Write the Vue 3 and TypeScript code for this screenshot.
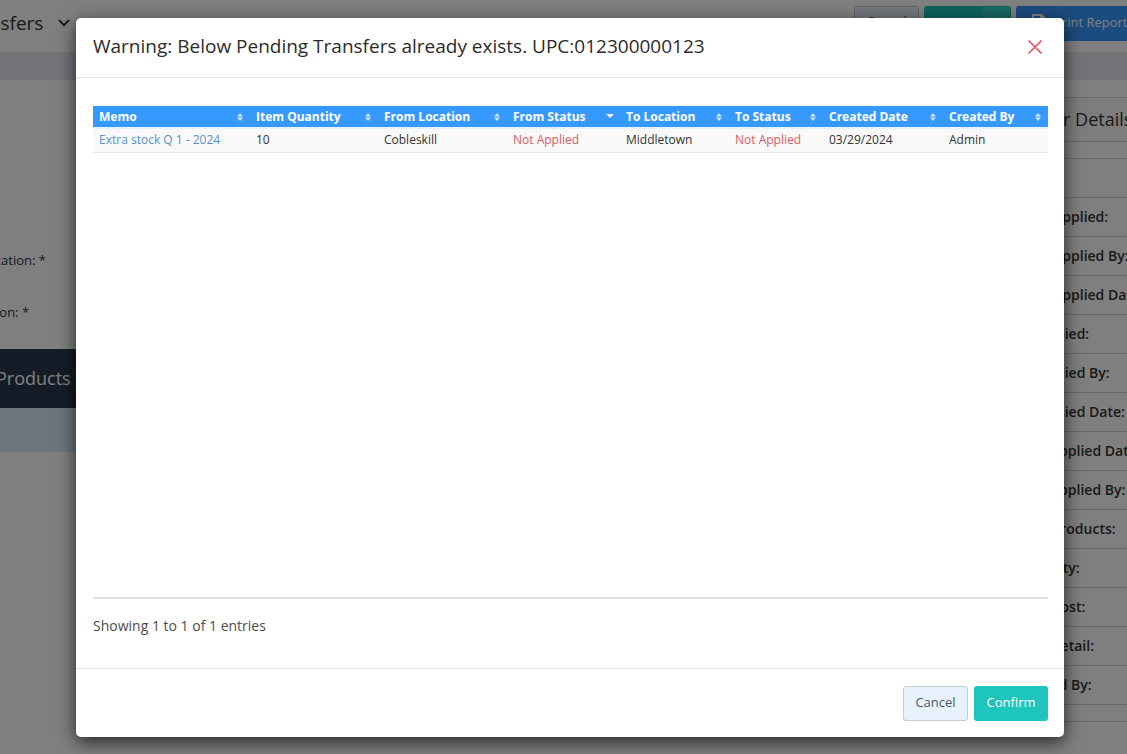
<script setup lang="ts">
import { ref } from 'vue'

interface Column {
  key: string
  label: string
  width: number
}

interface Transfer {
  memo: string
  quantity: number
  fromLocation: string
  fromStatus: string
  toLocation: string
  toStatus: string
  createdDate: string
  createdBy: string
}

const columns: Column[] = [
  { key: 'memo', label: 'Memo', width: 157 },
  { key: 'quantity', label: 'Item Quantity', width: 128 },
  { key: 'fromLocation', label: 'From Location', width: 129 },
  { key: 'fromStatus', label: 'From Status', width: 113 },
  { key: 'toLocation', label: 'To Location', width: 109 },
  { key: 'toStatus', label: 'To Status', width: 94 },
  { key: 'createdDate', label: 'Created Date', width: 120 },
  { key: 'createdBy', label: 'Created By', width: 105 },
]

const sortedBy = ref<string>('fromStatus')

const transfers: Transfer[] = [
  {
    memo: 'Extra stock Q 1 - 2024',
    quantity: 10,
    fromLocation: 'Cobleskill',
    fromStatus: 'Not Applied',
    toLocation: 'Middletown',
    toStatus: 'Not Applied',
    createdDate: '03/29/2024',
    createdBy: 'Admin',
  },
]

const details: string[] = [
  'Memo:',
  'From Applied:',
  'From Applied By:',
  'From Applied Date:',
  'To Applied:',
  'To Applied By:',
  'To Applied Date:',
  'Both Applied Date:',
  'Both Applied By:',
  'Total Products:',
  'Total Qty:',
  'Total Cost:',
  'Total Retail:',
  'Created By:',
]
</script>

<template>
  <div class="screen">
    <div class="page" aria-hidden="true">
      <header class="topbar">
        <span class="crumb">Transfers</span>
        <svg class="chevron" viewBox="0 0 12 8" width="12" height="8">
          <path d="M1 1.2 6 6.2 11 1.2" fill="none" stroke="#222" stroke-width="1.8" />
        </svg>
        <div class="actions">
          <button class="btn light" type="button" tabindex="-1">Cancel</button>
          <button class="btn teal split" type="button" tabindex="-1">
            <span class="split-main">Update</span><span class="split-more"></span>
          </button>
          <button class="btn blue" type="button" tabindex="-1">
            <svg viewBox="0 0 16 16" width="16" height="16">
              <path d="M2 7V0h10l3 3v4h-3V4h-2V2H4v5zM0 8h16v6h-2v-3H2v3H0zM3 12h10v4H3z" fill="#fff" />
            </svg>
            Print Report
          </button>
        </div>
      </header>
      <div class="band"></div>
      <div class="columns">
        <section class="form">
          <div class="fields">
            <span>From Location: *</span>
            <span>To Location: *</span>
          </div>
          <h2 class="products">Products to Transfer</h2>
          <div class="products-row"></div>
        </section>
        <aside class="details">
          <h2>Transfer Details</h2>
          <ul>
            <li v-for="item in details" :key="item">{{ item }}</li>
          </ul>
        </aside>
      </div>
    </div>

    <div class="overlay">
      <div class="modal" role="dialog" aria-modal="true" aria-labelledby="modal-title">
        <header class="modal-head">
          <h1 id="modal-title"><strong>Warning:</strong> Below Pending Transfers already exists. UPC:012300000123</h1>
          <button class="close" type="button" aria-label="Close">
            <svg viewBox="0 0 16 16" width="16" height="16">
              <path d="M1.5 1.5 14.5 14.5M14.5 1.5 1.5 14.5" fill="none" stroke="#e0585c" stroke-width="1.7" />
            </svg>
          </button>
        </header>

        <div class="modal-body">
          <div class="table-wrap">
            <table>
              <colgroup>
                <col v-for="c in columns" :key="c.key" :style="{ width: (c.width / 955) * 100 + '%' }" />
              </colgroup>
              <thead>
                <tr>
                  <th v-for="c in columns" :key="c.key" scope="col">
                    <button class="sort" type="button" @click="sortedBy = c.key">
                      {{ c.label }}
                      <svg v-if="sortedBy === c.key" viewBox="0 0 8 8" width="8" height="8">
                        <path d="M0 1h8L4 5z" fill="#fff" />
                      </svg>
                      <svg v-else viewBox="0 0 8 8" width="8" height="8">
                        <path d="M1 3.5h6L4 0zM1 4.5h6L4 8z" fill="#cfe4ff" />
                      </svg>
                    </button>
                  </th>
                </tr>
              </thead>
              <tbody>
                <tr v-for="t in transfers" :key="t.memo">
                  <td><a href="#">{{ t.memo }}</a></td>
                  <td>{{ t.quantity }}</td>
                  <td>{{ t.fromLocation }}</td>
                  <td class="pending">{{ t.fromStatus }}</td>
                  <td>{{ t.toLocation }}</td>
                  <td class="pending">{{ t.toStatus }}</td>
                  <td>{{ t.createdDate }}</td>
                  <td>{{ t.createdBy }}</td>
                </tr>
              </tbody>
            </table>
          </div>
          <p class="info">Showing 1 to 1 of 1 entries</p>
        </div>

        <footer class="modal-foot">
          <button class="btn light" type="button">Cancel</button>
          <button class="btn teal" type="button">Confirm</button>
        </footer>
      </div>
    </div>
  </div>
</template>

<style>
body {
  margin: 0;
}
</style>

<style scoped>
* {
  box-sizing: border-box;
}

.screen {
  position: relative;
  min-height: 100vh;
  overflow: hidden;
  font-family: 'Open Sans', 'Noto Sans', sans-serif;
  font-size: 13px;
  color: #333;
}

h1,
h2,
p,
ul {
  margin: 0;
  padding: 0;
  font-weight: 400;
}

/* Page behind the dialog; it runs past both window edges. */
.page {
  position: absolute;
  inset: 0 -80px 0 -100px;
  background: #fff;
}

.topbar {
  display: flex;
  align-items: center;
  height: 52px;
  padding: 0 60px 6px 60px;
}

.crumb {
  font-size: 19px;
  line-height: 24px;
}

.chevron {
  margin-left: 15px;
}

.actions {
  display: flex;
  gap: 5px;
  margin-left: auto;
}

.btn {
  display: inline-flex;
  align-items: center;
  justify-content: center;
  height: 35px;
  padding: 0 11px 4px;
  border: 1px solid transparent;
  border-radius: 3px;
  font: 400 13px/20px 'Open Sans', 'Noto Sans', sans-serif;
  color: #fff;
  white-space: nowrap;
}

.light {
  min-width: 65px;
  background: #e8f2fd;
  border-color: #c5cad3;
  color: #4d5563;
}

.teal {
  min-width: 74px;
  background: #1dc5bc;
  font-weight: 500;
}

.split {
  width: 87px;
  padding: 0;
  overflow: hidden;
}

.split-main {
  flex: 1;
}

.split-more {
  width: 28px;
  height: 35px;
  background: #35d0c4;
}

.blue {
  width: 131px;
  gap: 8px;
  justify-content: flex-start;
  padding: 0 0 2px 13px;
  background: #3699ff;
  font-weight: 500;
}

.band {
  height: 28px;
  background: #e6e8f2;
}

.columns {
  display: grid;
  grid-template-columns: 1fr 220px;
  gap: 16px;
}

.form {
  padding-top: 170px;
}

.fields {
  display: flex;
  flex-direction: column;
  gap: 32px;
  padding-left: 45px;
  line-height: 20px;
}

.products {
  margin-top: 27px;
  padding-left: 96px;
  background: #2c384e;
  color: #fff;
  font-size: 18px;
  line-height: 59px;
}

.products-row {
  height: 44px;
  background: #d9eafa;
}

.details {
  margin-top: 17px;
  border: 1px solid #d5d5d5;
}

.details h2 {
  padding-left: 12px;
  border-bottom: 1px solid #d5d5d5;
  background: #fafafa;
  font-size: 18px;
  line-height: 43px;
}

.details ul {
  margin: 16px 0;
  border-top: 1px solid #d5d5d5;
  list-style: none;
}

.details li {
  height: 39px;
  padding-left: 26px;
  border-bottom: 1px solid #d5d5d5;
  font-size: 14px;
  font-weight: 600;
  line-height: 38px;
}

.overlay {
  position: relative;
  min-height: 100vh;
  padding: 18px 63px 17px 76px;
  background: rgba(0, 0, 0, 0.5);
}

.modal {
  border-radius: 5px;
  background: #fff;
  box-shadow: 0 5px 18px rgba(0, 0, 0, 0.7);
}

.modal-head {
  display: flex;
  align-items: center;
  justify-content: space-between;
  height: 60px;
  padding: 0 21px 2px 17px;
  border-bottom: 1px solid #e4e4e4;
}

.modal-head h1 {
  font-size: 19px;
  line-height: 27px;
  color: #2b2b2b;
}

.modal-head strong {
  font-weight: 500;
}

.close {
  display: flex;
  padding: 0;
  border: 0;
  background: none;
}

.modal-body {
  padding: 28px 16px 32px 17px;
}

.table-wrap {
  min-height: 493px;
  border-bottom: 2px solid #e2e2e2;
}

table {
  width: 100%;
  table-layout: fixed;
  border-collapse: collapse;
}

th {
  height: 22px;
  padding: 1px 6px 0;
  background: #3699ff;
  text-align: left;
}

.sort {
  display: flex;
  align-items: center;
  justify-content: space-between;
  width: 100%;
  padding: 0;
  border: 0;
  background: none;
  color: #fff;
  font: 700 12px/20px 'Open Sans', 'Noto Sans', sans-serif;
  white-space: nowrap;
}

td {
  height: 24px;
  padding: 0 6px;
  border-top: 2px solid #e3f2fb;
  border-bottom: 1px solid #e6e6e6;
  background: #f9f9f9;
  font-size: 12px;
  line-height: 20px;
  white-space: nowrap;
}

td a {
  color: #5590d5;
  text-decoration: none;
}

.pending {
  color: #dc5a60;
}

.info {
  margin-top: 16px;
  font-size: 14px;
  line-height: 21px;
  color: #4c4c4c;
}

.modal-foot {
  display: flex;
  justify-content: flex-end;
  gap: 6px;
  padding: 17px 16px 16px;
  border-top: 1px solid #e4e4e4;
}
</style>
